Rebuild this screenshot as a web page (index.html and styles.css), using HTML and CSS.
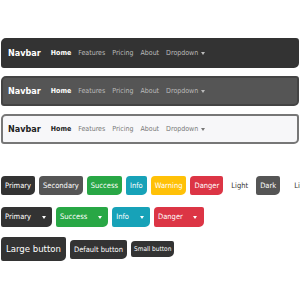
FILE: index.html
```html
<!DOCTYPE html>
<html lang="en">
<head>
    <meta charset="UTF-8">
    <title>Sketchy</title>
    <link rel="stylesheet" href="styles.css">
</head>
<body>
    <div class="navbar navbar-dark">
        <span class="brand">Navbar</span>
        <span class="nav-link active">Home</span>
        <span class="nav-link">Features</span>
        <span class="nav-link">Pricing</span>
        <span class="nav-link">About</span>
        <span class="nav-link">Dropdown <span class="caret"></span></span>
    </div>
    <div class="navbar navbar-gray">
        <span class="brand">Navbar</span>
        <span class="nav-link active">Home</span>
        <span class="nav-link">Features</span>
        <span class="nav-link">Pricing</span>
        <span class="nav-link">About</span>
        <span class="nav-link">Dropdown <span class="caret"></span></span>
    </div>
    <div class="navbar navbar-light">
        <span class="brand">Navbar</span>
        <span class="nav-link active">Home</span>
        <span class="nav-link">Features</span>
        <span class="nav-link">Pricing</span>
        <span class="nav-link">About</span>
        <span class="nav-link">Dropdown <span class="caret"></span></span>
    </div>

    <div class="btn-row first">
        <span class="btn primary">Primary</span>
        <span class="btn secondary">Secondary</span>
        <span class="btn success">Success</span>
        <span class="btn info">Info</span>
        <span class="btn warning">Warning</span>
        <span class="btn danger">Danger</span>
        <span class="btn light">Light</span>
        <span class="btn dark">Dark</span>
        <span class="btn link">Link</span>
    </div>
    <div class="btn-row second">
        <span class="btn-group primary"><span class="btn">Primary</span><span class="toggle"><span class="caret"></span></span></span>
        <span class="btn-group success"><span class="btn">Success</span><span class="toggle"><span class="caret"></span></span></span>
        <span class="btn-group info"><span class="btn">Info</span><span class="toggle"><span class="caret"></span></span></span>
        <span class="btn-group danger"><span class="btn">Danger</span><span class="toggle"><span class="caret"></span></span></span>
    </div>
    <div class="btn-row sizes">
        <span class="btn primary lg">Large button</span>
        <span class="btn primary">Default button</span>
        <span class="btn primary sm">Small button</span>
    </div>
</body>
</html>
```

FILE: styles.css
```css
body {
    margin: 0;
    padding: 38px 1px 0 1px;
    background: #fff;
    font-family: "DejaVu Sans Condensed", "DejaVu Sans", sans-serif;
    overflow: hidden;
    width: 298px;
}
.navbar {
    display: flex;
    align-items: center;
    height: 26px;
    padding: 0 5px;
    border: 2px solid #333;
    border-radius: 5px 3px 5px 3px;
    margin-bottom: 8px;
}
.navbar-dark {
    background: #333;
}
.navbar-gray {
    background: #555;
    border-color: #444;
}
.navbar-light {
    background: #f7f7f9;
    border-color: #777;
}
.brand {
    font-weight: bold;
    font-size: 9px;
    margin-right: 10px;
    color: #fff;
}
.nav-link {
    font-size: 7px;
    margin-right: 7px;
    color: #bbb;
}
.nav-link.active {
    color: #fff;
    font-weight: bold;
}
.navbar-light .brand,
.navbar-light .nav-link.active {
    color: #222;
}
.navbar-light .nav-link {
    color: #777;
}
.caret {
    display: inline-block;
    vertical-align: middle;
    margin-left: 1px;
    border-top: 3px solid;
    border-left: 2.5px solid transparent;
    border-right: 2.5px solid transparent;
}
.btn-row {
    display: flex;
    align-items: center;
    gap: 4px;
    white-space: nowrap;
}
.btn-row.first {
    margin-top: 32px;
}
.btn-row.second {
    margin-top: 12px;
}
.btn-row.sizes {
    margin-top: 10px;
}
.btn {
    display: inline-block;
    font-size: 7.5px;
    line-height: 15px;
    padding: 2px 4px;
    color: #fff;
    border-radius: 4px 2px 5px 2px;
}
.primary { background: #333; }
.secondary { background: #555; }
.success { background: #28a745; }
.info { background: #17a2b8; }
.warning { background: #ffc107; }
.danger { background: #dc3545; }
.dark { background: #555; }
.light, .link {
    color: #333;
    background: transparent;
}
.link {
    margin-left: 6px;
}
.btn-group {
    display: inline-flex;
    align-items: center;
    border-radius: 4px 2px 5px 2px;
    color: #fff;
}
.btn-group .btn {
    line-height: 16px;
}
.toggle {
    display: inline-flex;
    align-items: center;
    justify-content: center;
    width: 17px;
}
.toggle .caret {
    margin-left: 0;
}
.lg {
    font-size: 9.5px;
    line-height: 18px;
    padding: 3px 5px;
}
.sm {
    font-size: 6.5px;
    line-height: 12px;
    padding: 2px 3px;
}
```
